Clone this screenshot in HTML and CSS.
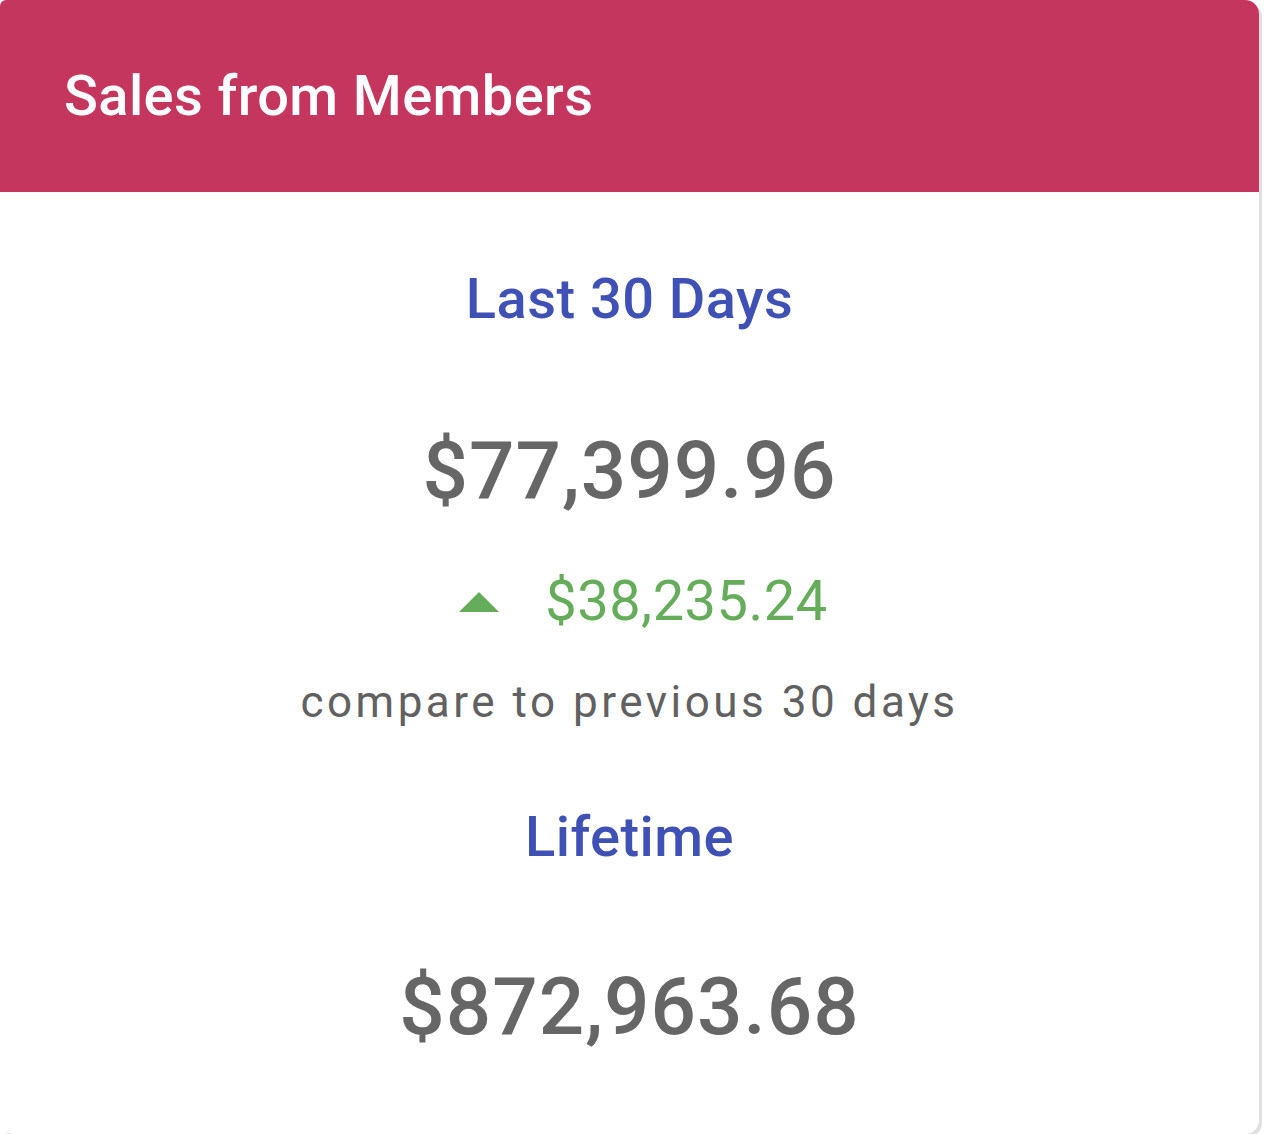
FILE: index.html
```html
<!DOCTYPE html>
<html lang="en">
<head>
<meta charset="utf-8">
<title>Sales from Members</title>
<link rel="stylesheet" href="styles.css">
</head>
<body>
<div class="card">
  <div class="card-header">
    <h1 class="card-title">Sales from Members</h1>
  </div>
  <div class="card-body">
    <h2 class="period">Last 30 Days</h2>
    <div class="amount amount-first">$77,399.96</div>
    <div class="change">
      <svg class="arrow" width="96" height="20" viewBox="0 0 96 20" aria-hidden="true"><path d="M28 20 L48 0 L68 20 Z" fill="#66ad5b"/></svg>
      <span class="change-value">$38,235.24</span>
    </div>
    <div class="compare">compare to previous 30 days</div>
    <h2 class="period period-lifetime">Lifetime</h2>
    <div class="amount amount-lifetime">$872,963.68</div>
  </div>
</div>
</body>
</html>
```
FILE: styles.css
```css
html, body {
  margin: 0;
  padding: 0;
  background: #ffffff;
}
body {
  font-family: Roboto, "Liberation Sans", sans-serif;
}
.card {
  width: 1259px;
  height: 1134px;
  background: #ffffff;
  border-radius: 6px 14px 14px 14px;
  box-shadow: 3px 3px 0 #e0e0e0;
  overflow: hidden;
  display: flex;
  flex-direction: column;
}
.card-header {
  height: 192px;
  background: #c5365f;
  display: flex;
  align-items: center;
  padding-left: 64px;
  flex-shrink: 0;
}
.card-title {
  margin: 0;
  color: #ffffff;
  font-size: 56px;
  font-weight: 500;
  letter-spacing: 0.4px;
  line-height: normal;
}
.card-body {
  display: flex;
  flex-direction: column;
  align-items: center;
  text-align: center;
}
.period {
  margin: 74px 0 0;
  color: #3f51b5;
  font-size: 56px;
  font-weight: 500;
  letter-spacing: 0.45px;
  line-height: normal;
}
.period-lifetime {
  margin-top: 76px;
}
.amount {
  color: #666666;
  font-size: 80px;
  font-weight: 500;
  letter-spacing: 1px;
  line-height: normal;
  margin-top: 92px;
}
.amount-lifetime {
  margin-top: 90px;
}
.change {
  display: flex;
  align-items: center;
  gap: 18px;
  margin-top: 50px;
}
.arrow {
  display: block;
  margin-top: 2px;
}
.change-value {
  color: #66ad5b;
  font-size: 56px;
  font-weight: 400;
  letter-spacing: 0.5px;
  line-height: normal;
}
.compare {
  margin-top: 42px;
  color: #616161;
  font-size: 44px;
  font-weight: 400;
  letter-spacing: 3.5px;
  line-height: normal;
}
```
